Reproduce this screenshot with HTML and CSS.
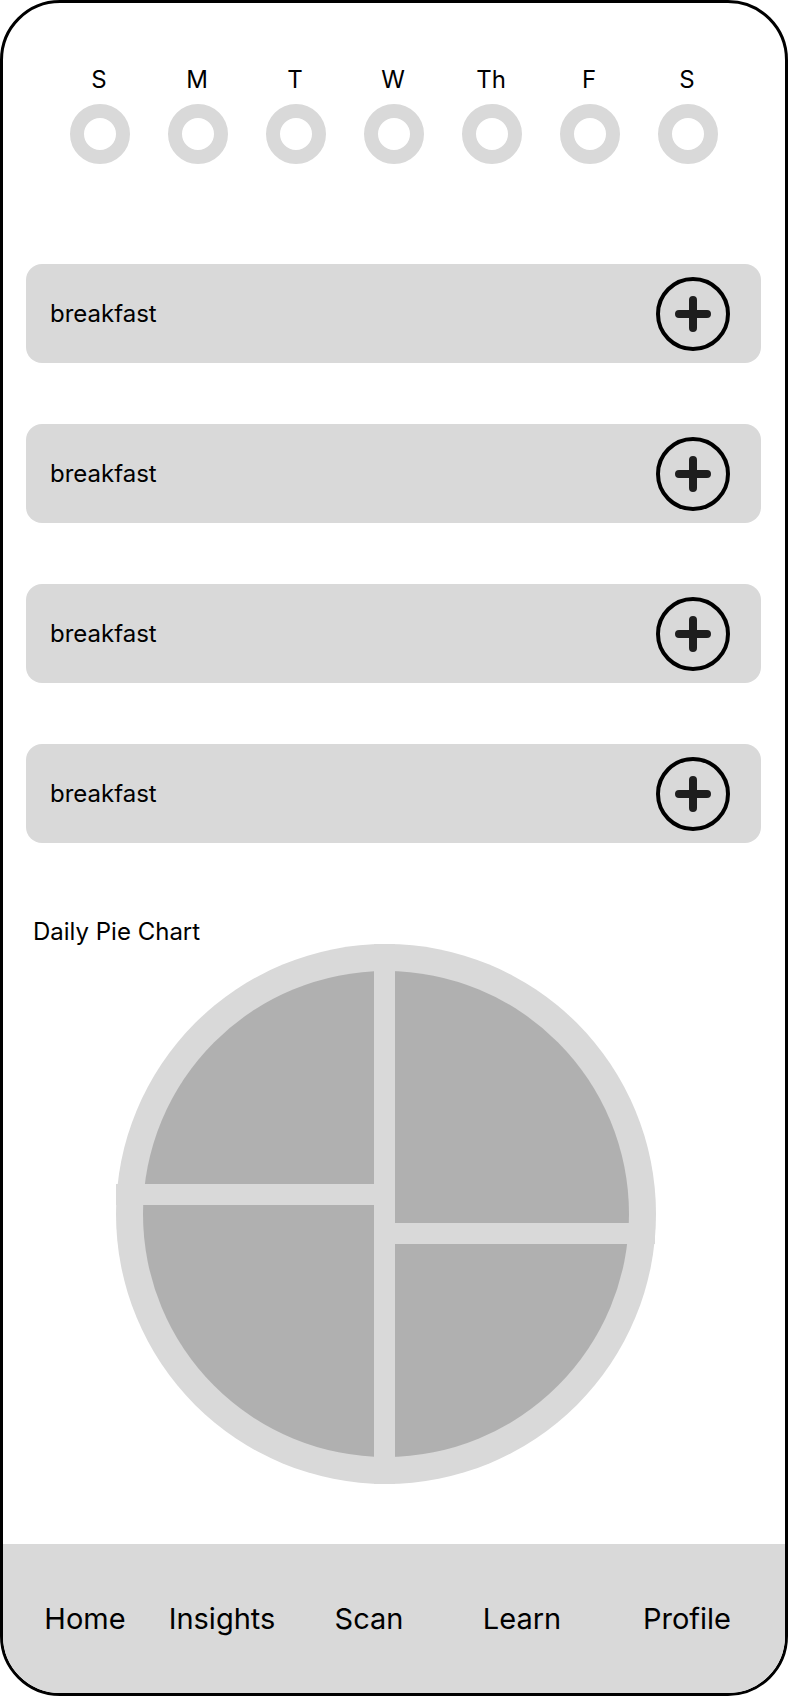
FILE: index.html
```html
<!DOCTYPE html>
<html lang="en">
<head>
<meta charset="utf-8">
<title>Daily</title>
<link rel="stylesheet" href="styles.css">
</head>
<body>
<div class="phone">
  <div class="week">
    <div class="day"><span class="day-label">S</span><span class="day-ring"></span></div>
    <div class="day"><span class="day-label">M</span><span class="day-ring"></span></div>
    <div class="day"><span class="day-label">T</span><span class="day-ring"></span></div>
    <div class="day"><span class="day-label">W</span><span class="day-ring"></span></div>
    <div class="day"><span class="day-label">Th</span><span class="day-ring"></span></div>
    <div class="day"><span class="day-label">F</span><span class="day-ring"></span></div>
    <div class="day"><span class="day-label">S</span><span class="day-ring"></span></div>
  </div>

  <div class="meals">
    <div class="meal">
      <span class="meal-name">breakfast</span>
      <svg class="add" viewBox="0 0 74 74" width="74" height="74"><circle cx="37" cy="37" r="35" fill="none" stroke="#000" stroke-width="4"/><path d="M37 23V51M23 37H51" stroke="#1e1e1e" stroke-width="8" stroke-linecap="round"/></svg>
    </div>
    <div class="meal">
      <span class="meal-name">breakfast</span>
      <svg class="add" viewBox="0 0 74 74" width="74" height="74"><circle cx="37" cy="37" r="35" fill="none" stroke="#000" stroke-width="4"/><path d="M37 23V51M23 37H51" stroke="#1e1e1e" stroke-width="8" stroke-linecap="round"/></svg>
    </div>
    <div class="meal">
      <span class="meal-name">breakfast</span>
      <svg class="add" viewBox="0 0 74 74" width="74" height="74"><circle cx="37" cy="37" r="35" fill="none" stroke="#000" stroke-width="4"/><path d="M37 23V51M23 37H51" stroke="#1e1e1e" stroke-width="8" stroke-linecap="round"/></svg>
    </div>
    <div class="meal">
      <span class="meal-name">breakfast</span>
      <svg class="add" viewBox="0 0 74 74" width="74" height="74"><circle cx="37" cy="37" r="35" fill="none" stroke="#000" stroke-width="4"/><path d="M37 23V51M23 37H51" stroke="#1e1e1e" stroke-width="8" stroke-linecap="round"/></svg>
    </div>
  </div>

  <div class="chart">
    <div class="chart-title">Daily Pie Chart</div>
    <svg class="pie" viewBox="0 0 540 540" width="540" height="540">
      <circle cx="270" cy="270" r="270" fill="#d9d9d9"/>
      <circle cx="270" cy="270" r="243" fill="#b0b0b0"/>
      <rect x="258" y="0" width="21" height="540" fill="#d9d9d9"/>
      <rect x="0" y="240" width="258" height="21" fill="#d9d9d9"/>
      <rect x="279" y="279" width="260" height="21" fill="#d9d9d9"/>
    </svg>
  </div>

  <nav class="tabbar">
    <span class="tab">Home</span>
    <span class="tab">Insights</span>
    <span class="tab">Scan</span>
    <span class="tab">Learn</span>
    <span class="tab">Profile</span>
  </nav>
</div>
</body>
</html>
```

FILE: styles.css
```css
* { box-sizing: border-box; }

html, body {
  margin: 0;
  padding: 0;
  background: #fff;
}

body {
  font-family: Inter, "Noto Sans", "Liberation Sans", sans-serif;
  color: #000;
}

.phone {
  width: 788px;
  height: 1696px;
  border: 3px solid #000;
  border-radius: 60px;
  overflow: hidden;
  display: flex;
  flex-direction: column;
  background: #fff;
}

.week {
  display: flex;
  gap: 38px;
  padding: 62px 0 0 67px;
}

.day {
  width: 60px;
  display: flex;
  flex-direction: column;
  align-items: center;
  gap: 9px;
}

.day-label {
  font-size: 24px;
  line-height: 30px;
  height: 30px;
  margin-right: 2px;
}

.day-ring {
  width: 60px;
  height: 60px;
  border: 14px solid #d9d9d9;
  border-radius: 50%;
}

.meals {
  display: flex;
  flex-direction: column;
  gap: 61px;
  padding: 0 24px 0 23px;
  margin-top: 100px;
}

.meal {
  height: 99px;
  background: #d9d9d9;
  border-radius: 16px;
  display: flex;
  align-items: center;
  justify-content: space-between;
  padding: 0 31px 0 24px;
}

.meal-name {
  font-size: 24px;
  line-height: 29px;
}

.add {
  display: block;
  flex: none;
}

.chart {
  margin-top: 77px;
  display: flex;
  flex-direction: column;
}

.chart-title {
  font-size: 24px;
  line-height: 24px;
  padding-left: 30px;
}

.pie {
  display: block;
  margin-left: 113px;
}

.tabbar {
  margin-top: auto;
  height: 149px;
  background: #d9d9d9;
  display: grid;
  grid-template-columns: 130px 144px 150px 156px 174px;
  align-items: center;
  justify-items: center;
  padding: 0 11px 0 17px;
}

.tab {
  font-size: 29px;
  line-height: 36px;
}
```
